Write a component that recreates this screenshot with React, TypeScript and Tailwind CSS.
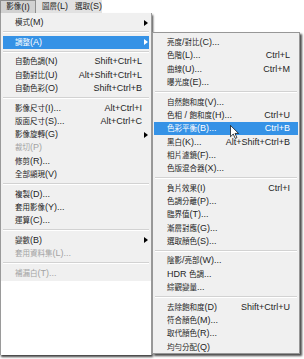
import React from "react";

type Item =
  | "sep"
  | { t: string; k?: string; arrow?: boolean; hl?: boolean; dis?: boolean };

const LEFT: Item[] = [
  { t: "模式(M)", arrow: true },
  "sep",
  { t: "調整(A)", arrow: true, hl: true },
  "sep",
  { t: "自動色調(N)", k: "Shift+Ctrl+L" },
  { t: "自動對比(U)", k: "Alt+Shift+Ctrl+L" },
  { t: "自動色彩(O)", k: "Shift+Ctrl+B" },
  "sep",
  { t: "影像尺寸(I)...", k: "Alt+Ctrl+I" },
  { t: "版面尺寸(S)...", k: "Alt+Ctrl+C" },
  { t: "影像旋轉(G)", arrow: true },
  { t: "裁切(P)", dis: true },
  { t: "修剪(R)..." },
  { t: "全部顯現(V)" },
  "sep",
  { t: "複製(D)..." },
  { t: "套用影像(Y)..." },
  { t: "運算(C)..." },
  "sep",
  { t: "變數(B)", arrow: true },
  { t: "套用資料集(L)...", dis: true },
  "sep",
  { t: "補漏白(T)...", dis: true },
];

const SUB: Item[] = [
  { t: "亮度/對比(C)..." },
  { t: "色階(L)...", k: "Ctrl+L" },
  { t: "曲線(U)...", k: "Ctrl+M" },
  { t: "曝光度(E)..." },
  "sep",
  { t: "自然飽和度(V)..." },
  { t: "色相 / 飽和度(H)...", k: "Ctrl+U" },
  { t: "色彩平衡(B)...", k: "Ctrl+B", hl: true },
  { t: "黑白(K)...", k: "Alt+Shift+Ctrl+B" },
  { t: "相片濾鏡(F)..." },
  { t: "色版混合器(X)..." },
  "sep",
  { t: "負片效果(I)", k: "Ctrl+I" },
  { t: "色調分離(P)..." },
  { t: "臨界值(T)..." },
  { t: "漸層對應(G)..." },
  { t: "選取顏色(S)..." },
  "sep",
  { t: "陰影/亮部(W)..." },
  { t: "HDR 色調..." },
  { t: "綜觀變量..." },
  "sep",
  { t: "去除飽和度(D)", k: "Shift+Ctrl+U" },
  { t: "符合顏色(M)..." },
  { t: "取代顏色(R)..." },
  { t: "均勻分配(Q)" },
];

function Txt({ s }: { s: string }) {
  const parts = s.split(/([\u3000-\u9fff\uff00-\uffef]+)/);
  return (
    <>
      {parts.map((p, i) =>
        /[\u3000-\u9fff\uff00-\uffef]/.test(p) ? (
          <span key={i} className="text-[7.5px]">
            {p}
          </span>
        ) : (
          <span key={i}>{p}</span>
        )
      )}
    </>
  );
}

function Arrow({ white }: { white?: boolean }) {
  return (
    <svg width="4" height="6" viewBox="0 0 4 6" className="absolute right-[1px] top-[3.6px]">
      <path d="M0 0 L4 3 L0 6 Z" fill={white ? "#ffffff" : "#000000"} />
    </svg>
  );
}

function Menu({ items, side }: { items: Item[]; side: "l" | "r" }) {
  return (
    <>
      {items.map((it, i) => {
        if (it === "sep") {
          return (
            <div
              key={i}
              className={
                side === "l"
                  ? "h-[6.3px] mx-[2px] flex flex-col justify-center"
                  : "h-[6.3px] ml-[2px] mr-[2px] flex flex-col justify-center"
              }
            >
              <div className="h-px bg-[#d2d2d2]" />
              <div className="h-px bg-white" />
            </div>
          );
        }
        const color = it.hl ? "text-white" : it.dis ? "text-[#a3a3a3]" : "text-[#262626]";
        return (
          <div
            key={i}
            className={
              (side === "l"
                ? "mx-[2px] pl-[12px] pr-[7px] "
                : "mx-[1px] pl-[13px] pr-[8px] ") +
              "relative h-[13.3px] flex items-center whitespace-nowrap leading-none " +
              color +
              (it.hl ? " bg-[#3592e6]" : "")
            }
          >
            <span>
              <Txt s={it.t} />
            </span>
            {it.k && <span className="ml-auto">{it.k}</span>}
            {it.arrow && <Arrow white={it.hl} />}
          </div>
        );
      })}
    </>
  );
}

export default function App() {
  return (
    <div
      className="relative w-[304px] h-[359px] bg-white overflow-hidden flex text-[9px]"
      style={{ fontFamily: '"Liberation Sans", "Noto Sans CJK TC", sans-serif' }}
    >
      {/* left column */}
      <div className="w-[152px] flex flex-col">
        <div className="h-[13px] flex items-stretch">
          <div className="w-[102px] flex bg-[#e2e2e2] text-[#262626]">
            <div className="w-[36px] flex items-center justify-center bg-[#d2d2d2] border border-b-0 border-[#8f8f8f] leading-none">
              <Txt s="影像(I)" />
            </div>
            <div className="w-[38px] flex items-center justify-center leading-none">
              <Txt s="圖層(L)" />
            </div>
            <div className="w-[28px] flex items-center justify-start pl-[1px] leading-none">
              <Txt s="選取(S)" />
            </div>
          </div>
        </div>
        <div className="h-[342px] w-[152px] flex flex-col border-l border-r border-[#9a9a9a] bg-white shadow-[1px_2px_2px_rgba(0,0,0,0.75)]">
          <div className="bg-[#f0f0f0] pt-[3px] pb-[1px]">
            <Menu items={LEFT} side="l" />
          </div>
        </div>
      </div>
      {/* submenu */}
      <div className="pt-[32px]">
        <div className="w-[148px] h-[322px] bg-[#f0f0f0] border border-[#979797] pt-[3px] shadow-[2px_2px_2px_rgba(0,0,0,0.7)]">
          <Menu items={SUB} side="r" />
        </div>
      </div>
      {/* mouse cursor */}
      <svg
        width="9"
        height="14"
        viewBox="0 0 12 19"
        className="absolute left-[230px] top-[125px]"
      >
        <path
          d="M0.5 0.5 L0.5 16 L4.3 12.3 L7 18.2 L9.3 17.2 L6.7 11.4 L11.5 11.4 Z"
          fill="#ffffff"
          stroke="#000000"
          strokeWidth="1"
          strokeLinejoin="miter"
        />
      </svg>
    </div>
  );
}
